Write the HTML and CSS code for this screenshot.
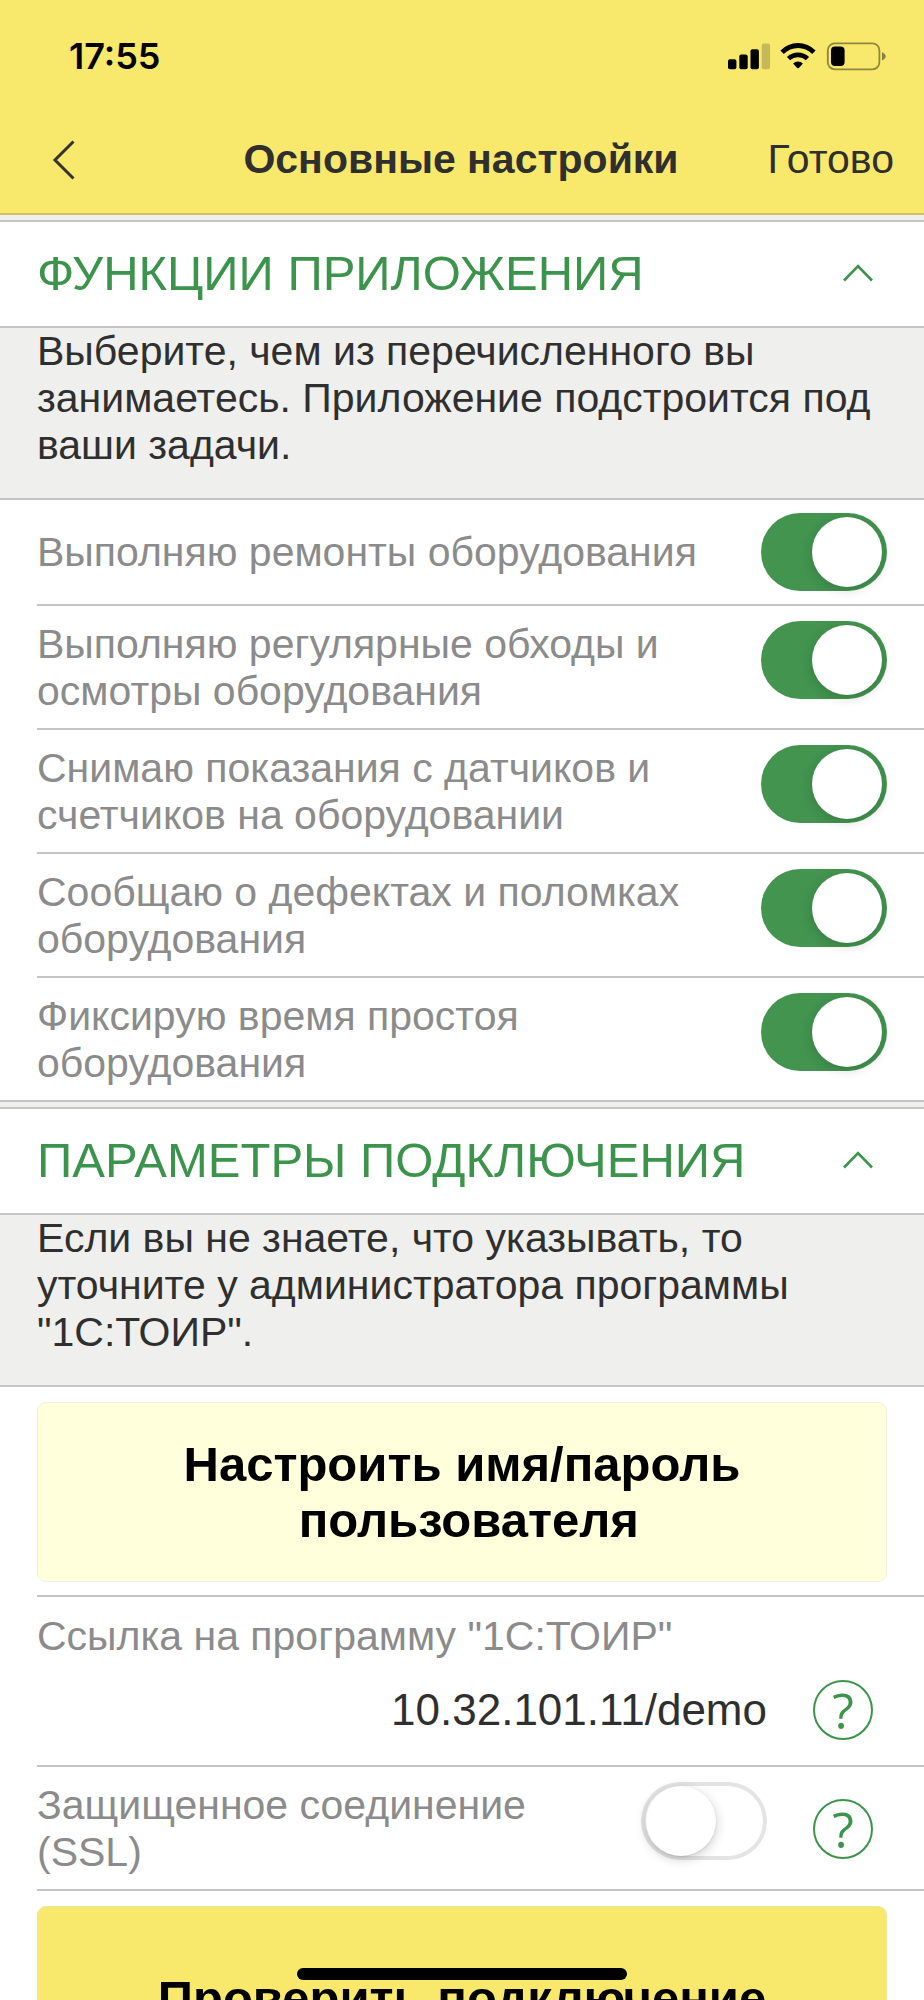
FILE: index.html
```html
<!DOCTYPE html>
<html lang="ru">
<head>
<meta charset="utf-8">
<meta name="viewport" content="width=device-width, initial-scale=1">
<title>Основные настройки</title>
<link rel="stylesheet" href="styles.css">
</head>
<body>
<div class="screen">
  <header class="header">
    <div class="status">
      <time class="clock">17:55</time>
      <svg class="status-icons" width="160" height="30" viewBox="0 0 160 30" aria-hidden="true">
        <rect x="1" y="18.3" width="8.4" height="10" rx="2"/>
        <rect x="12.3" y="13.6" width="8.4" height="14.7" rx="2"/>
        <rect x="23.5" y="8.2" width="8.4" height="20.1" rx="2"/>
        <rect x="34.7" y="2.6" width="8.4" height="25.7" rx="2" opacity=".2"/>
        <path d="M53.4 9.6A24.2 24.2 0 0 1 88.6 9.6L85.2 13.1A19.4 19.4 0 0 0 56.8 13.1Z"/>
        <path d="M59.9 16A15.8 15.8 0 0 1 82.1 16L78.8 19.3A11.2 11.2 0 0 0 63.2 19.3Z"/>
        <path d="M66.1 22.4A7.2 7.2 0 0 1 75.9 22.4L71.9 26.9Q71 27.8 70.1 26.9Z"/>
        <rect x="100.8" y="2.3" width="51.6" height="26" rx="7" fill="none" stroke="#000" stroke-opacity=".42" stroke-width="1.8"/>
        <rect x="104" y="5.5" width="13.6" height="19.6" rx="4"/>
        <path d="M155 11.2Q158.6 12.6 158.6 15.3T155 19.4Z" opacity=".45"/>
      </svg>
    </div>
    <nav class="nav">
      <button class="back" type="button" aria-label="Назад">
        <svg width="24" height="40" viewBox="0 0 24 40" fill="none" stroke="#333" stroke-width="3" aria-hidden="true"><path d="M21.5 1.5L3 20L21.5 38.5"/></svg>
      </button>
      <h1 class="title">Основные настройки</h1>
      <button class="done" type="button">Готово</button>
    </nav>
  </header>

  <main class="content">
    <section class="section">
      <button class="section-head" type="button" aria-expanded="true">
        <span>ФУНКЦИИ ПРИЛОЖЕНИЯ</span>
        <svg width="32" height="20" viewBox="0 0 32 20" fill="none" stroke="#3c934c" stroke-width="2.6" aria-hidden="true"><path d="M2 17.5L16 3L30 17.5"/></svg>
      </button>
      <p class="hint">Выберите, чем из перечисленного вы занимаетесь. Приложение подстроится под ваши задачи.</p>
      <div class="rows">
        <div class="row row-single">
          <label for="repair">Выполняю ремонты оборудования</label>
          <input class="toggle" type="checkbox" role="switch" id="repair" checked>
        </div>
        <div class="row">
          <label for="rounds">Выполняю регулярные обходы и осмотры оборудования</label>
          <input class="toggle" type="checkbox" role="switch" id="rounds" checked>
        </div>
        <div class="row">
          <label for="meters">Снимаю показания с датчиков и счетчиков на оборудовании</label>
          <input class="toggle" type="checkbox" role="switch" id="meters" checked>
        </div>
        <div class="row">
          <label for="defects">Сообщаю о дефектах и поломках оборудования</label>
          <input class="toggle" type="checkbox" role="switch" id="defects" checked>
        </div>
        <div class="row">
          <label for="downtime">Фиксирую время простоя оборудования</label>
          <input class="toggle" type="checkbox" role="switch" id="downtime" checked>
        </div>
      </div>
    </section>

    <section class="section">
      <button class="section-head" type="button" aria-expanded="true">
        <span>ПАРАМЕТРЫ ПОДКЛЮЧЕНИЯ</span>
        <svg width="32" height="20" viewBox="0 0 32 20" fill="none" stroke="#3c934c" stroke-width="2.6" aria-hidden="true"><path d="M2 17.5L16 3L30 17.5"/></svg>
      </button>
      <p class="hint">Если вы не знаете, что указывать, то уточните у администратора программы "1С:ТОИР".</p>
      <div class="rows">
        <div class="row row-action">
          <button class="action" type="button">Настроить имя/пароль<br>&nbsp;пользователя</button>
        </div>
        <div class="row row-field">
          <label for="link">Ссылка на программу "1С:ТОИР"</label>
          <div class="field">
            <input class="value" type="text" id="link" value="10.32.101.11/demo">
            <button class="help" type="button" aria-label="Справка: ссылка на программу"><span>?</span></button>
          </div>
        </div>
        <div class="row row-help">
          <label for="ssl">Защищенное соединение (SSL)</label>
          <input class="toggle" type="checkbox" role="switch" id="ssl">
          <button class="help" type="button" aria-label="Справка: защищенное соединение"><span>?</span></button>
        </div>
        <div class="row row-action">
          <button class="action action-main" type="button">Проверить подключение</button>
        </div>
      </div>
    </section>
  </main>
  <div class="home-indicator"></div>
</div>
</body>
</html>
```

FILE: styles.css
```css
:root {
  --yellow: #f8e86c;
  --green: #3c934c;
  --line: #c4c4c4;
  --ink: #2f2f2f;
  --muted: #8b8b8b;
  --panel: #efefee;
  --inset: 37px;
}

* {
  box-sizing: border-box;
}

body {
  margin: 0;
  background: #fff;
  color: var(--ink);
  font: 41px/47px "Liberation Sans", Arial, sans-serif;
}

h1,
p {
  margin: 0;
}

button,
input {
  margin: 0;
  padding: 0;
  border: 0;
  background: none;
  color: inherit;
  font: inherit;
}

svg {
  display: block;
  flex: none;
}

.screen {
  display: flex;
  flex-direction: column;
  height: 100vh;
  overflow: hidden;
}

.header {
  flex: none;
  background: var(--yellow);
  border-bottom: 2px solid #cfc26a;
}

.status {
  display: flex;
  align-items: center;
  justify-content: space-between;
  height: 106px;
  padding: 6px 37px 0 69px;
}

.clock {
  color: #000;
  font: 600 36px/42px Inter, sans-serif;
}

.nav {
  display: grid;
  grid-template-columns: 1fr auto 1fr;
  align-items: center;
  height: 107px;
  padding: 0 30px 0 52px;
}

.back {
  justify-self: start;
}

.title {
  margin-right: 24px;
  font-size: 41px;
  font-weight: 700;
}

.done {
  justify-self: end;
}

.content {
  flex: 1;
  min-height: 0;
  overflow-y: auto;
  scrollbar-width: none;
  background: var(--panel);
}

.section {
  padding-top: 5px;
}

.section-head {
  display: flex;
  align-items: center;
  justify-content: space-between;
  width: 100%;
  padding: 23px 50px 25px var(--inset);
  border: solid var(--line);
  border-width: 2px 0;
  background: #fff;
  color: var(--green);
  font-size: 49px;
  line-height: 56px;
  text-align: left;
}

.hint {
  padding: 0 var(--inset) 29px;
  border-bottom: 2px solid var(--line);
}

.rows {
  background: #fff;
}

.row {
  display: flex;
  align-items: flex-start;
  gap: 37px;
  margin-left: var(--inset);
  padding: 15px var(--inset) 13px 0;
  border-bottom: 2px solid var(--line);
}

.row label {
  flex: 1;
  color: var(--muted);
}

.row-single {
  align-items: center;
  padding: 13px var(--inset) 13px 0;
}

.rows .row:last-child {
  margin-left: 0;
}

.rows .row-action:last-child {
  padding-left: var(--inset);
}

.rows .row:last-child:not(.row-action) {
  padding-left: var(--inset);
}

.toggle {
  display: block;
  flex: none;
  width: 126px;
  height: 78px;
  padding: 4px 5px;
  appearance: none;
  border-radius: 39px;
  box-shadow: inset 0 0 0 4px #e4e4e4;
}

.toggle::before {
  content: "";
  display: block;
  width: 70px;
  height: 70px;
  border-radius: 50%;
  background: #fff;
  box-shadow: 0 3px 12px rgba(0, 0, 0, .2), 0 1px 2px rgba(0, 0, 0, .1);
}

.toggle:checked {
  background: #42944f;
  box-shadow: none;
}

.toggle:checked::before {
  margin-left: auto;
  box-shadow: 0 3px 12px rgba(0, 0, 0, .16);
}

.action {
  width: 100%;
  padding: 33px 20px;
  border: 1px solid #efefe8;
  border-radius: 9px;
  background: #ffffdb;
  color: #000;
  font-size: 49px;
  font-weight: 700;
  line-height: 56px;
}

.action-main {
  padding: 63px 20px;
  border-color: #f0e6a0;
  background: var(--yellow);
}

.row-field {
  flex-direction: column;
  align-items: stretch;
  gap: 20px;
  padding: 16px 51px 25px 0;
}

.field {
  display: flex;
  align-items: center;
  gap: 46px;
}

.value {
  flex: 1;
  min-width: 0;
  font-size: 44px;
  line-height: 50px;
  text-align: right;
}

.row-help {
  gap: 46px;
  padding-right: 51px;
}

.row-help .help {
  align-self: center;
}

.help {
  display: flex;
  flex: none;
  align-items: center;
  justify-content: center;
  width: 60px;
  height: 60px;
  border: 2px solid var(--green);
  border-radius: 50%;
  color: var(--green);
  font: 500 50px/56px "Open Sans", sans-serif;
}

.home-indicator {
  position: fixed;
  bottom: 20px;
  left: 50%;
  width: 330px;
  height: 12px;
  margin-left: -165px;
  border-radius: 6px;
  background: #000;
}
```
